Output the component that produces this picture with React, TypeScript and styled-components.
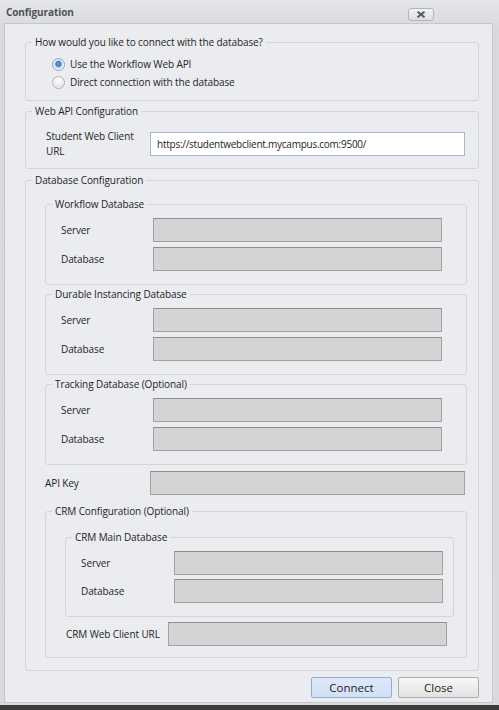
import styled, { createGlobalStyle } from "styled-components";

const GlobalStyle = createGlobalStyle`
  html, body {
    margin: 0;
    padding: 0;
    background: #3d3d3d;
  }
  body {
    font-family: "Open Sans", "Noto Sans", sans-serif;
    font-size: 10px;
    letter-spacing: -0.1px;
    color: #1e1e1e;
  }
  * {
    box-sizing: border-box;
  }
`;

const Window = styled.div`
  width: 499px;
  padding-bottom: 2px;
  background: linear-gradient(#e4e6ea, #d7d9de 30px, #d9dbdf);
`;

const TitleBar = styled.div`
  height: 23px;
  display: flex;
  align-items: center;
  justify-content: space-between;
  padding: 1px 65px 0 6px;
`;

const Title = styled.span`
  font-weight: 700;
  font-size: 10px;
  letter-spacing: -0.1px;
  color: #4f5156;
`;

const CloseBox = styled.button`
  width: 26px;
  height: 13px;
  padding: 0;
  margin-top: 4px;
  display: flex;
  align-items: center;
  justify-content: center;
  border: 1px solid #b3b5b9;
  border-radius: 3px;
  background: linear-gradient(#f3f4f6, #dcdee1);
`;

const Panel = styled.div`
  margin: 0 6px 0 4px;
  border: 1px solid #c6c8cd;
  background: #ebecf0;
  padding: 11px 13px 4px 20px;
  display: flex;
  flex-direction: column;
  gap: 3px;
`;

const Group = styled.fieldset<{ $mt?: number; $mr?: number }>`
  margin: ${(p) => p.$mt ?? 0}px ${(p) => p.$mr ?? 0}px 0 0;
  padding: 0;
  min-width: 0;
  border: 1px solid #d3d5d9;
  border-radius: 3px;
`;

const Legend = styled.legend`
  margin-left: 6px;
  padding: 0 3px;
  line-height: 14px;
  font-size: 10px;
  color: #1e1e1e;
`;

const Body = styled.div<{ $pad: string; $gap?: number }>`
  padding: ${(p) => p.$pad};
  display: flex;
  flex-direction: column;
  gap: ${(p) => p.$gap ?? 0}px;
`;

const RadioRow = styled.label`
  height: 18px;
  display: flex;
  align-items: center;
  gap: 5px;
`;

const RadioDot = styled.span<{ $on?: boolean }>`
  width: 13px;
  height: 13px;
  border-radius: 50%;
  border: 1px solid ${(p) => (p.$on ? "#8aa0c4" : "#aeb0b5")};
  background: ${(p) =>
    p.$on
      ? "radial-gradient(circle at 50% 45%, #6f97d8 0, #4a78c6 2.6px, #b8cbec 3.4px, #dfe8f7 5px, #f3f6fc 6px)"
      : "radial-gradient(circle at 50% 35%, #ffffff 0, #f4f4f4 3px, #dedfe2 6px)"};
  box-shadow: inset 0 0 0 1px rgba(255, 255, 255, 0.6);
`;

const Row = styled.div<{ $label: number; $mt?: number; $mr?: number; $ml?: number }>`
  display: grid;
  grid-template-columns: ${(p) => p.$label}px 1fr;
  align-items: center;
  margin: ${(p) => p.$mt ?? 0}px ${(p) => p.$mr ?? 0}px 0 ${(p) => p.$ml ?? 0}px;
`;

const FieldLabel = styled.span`
  line-height: 15px;
  padding-top: 1px;
`;

const Field = styled.input`
  height: 24px;
  width: 100%;
  margin: 0;
  font: inherit;
  font-size: 10px;
  color: #1e1e1e;
  padding: 0 6px;
  border: 1px solid #a2a2a2;
  border-top-color: #8e8e8e;
  background: #d4d4d4;
  outline: none;

  &:enabled {
    background: #ffffff;
    border-color: #a5b6d6;
    letter-spacing: -0.25px;
  }
`;

const Footer = styled.div`
  margin-top: 3px;
  display: flex;
  justify-content: flex-end;
  gap: 6px;
`;

const Button = styled.button<{ $primary?: boolean }>`
  width: 81px;
  height: 21px;
  padding: 0;
  font: inherit;
  font-size: 11.5px;
  color: #1e1e1e;
  border-radius: 2px;
  border: 1px solid ${(p) => (p.$primary ? "#8cadd9" : "#acacac")};
  background: ${(p) =>
    p.$primary ? "linear-gradient(#dfe8f9, #d4e0f6)" : "linear-gradient(#f7f7f7, #e2e2e2)"};
`;

const CloseIcon = () => (
  <svg width="10" height="7" viewBox="0 0 10 7">
    <path d="M1.5 0.8 L8.5 6.2 M8.5 0.8 L1.5 6.2" stroke="#55585e" strokeWidth="2" />
  </svg>
);

type DbProps = { title: string; labelW: number; pad: string; gap: number };

const ServerGroup = ({ title, labelW, pad, gap }: DbProps) => (
  <Group>
    <Legend>{title}</Legend>
    <Body $pad={pad} $gap={gap}>
      <Row $label={labelW}>
        <FieldLabel>Server</FieldLabel>
        <Field disabled />
      </Row>
      <Row $label={labelW}>
        <FieldLabel>Database</FieldLabel>
        <Field disabled />
      </Row>
    </Body>
  </Group>
);

const App = () => {
  return (
    <>
      <GlobalStyle />
      <Window>
        <TitleBar>
          <Title>Configuration</Title>
          <CloseBox aria-label="Close">
            <CloseIcon />
          </CloseBox>
        </TitleBar>
        <Panel>
          <Group>
            <Legend>How would you like to connect with the database?</Legend>
            <Body $pad="6px 0 9px 26px">
              <RadioRow>
                <RadioDot $on />
                Use the Workflow Web API
              </RadioRow>
              <RadioRow>
                <RadioDot />
                Direct connection with the database
              </RadioRow>
            </Body>
          </Group>

          <Group>
            <Legend>Web API Configuration</Legend>
            <Body $pad="10px 13px 9px 20px">
              <Row $label={104}>
                <FieldLabel>Student Web Client URL</FieldLabel>
                <Field defaultValue="https://studentwebclient.mycampus.com:9500/" />
              </Row>
            </Body>
          </Group>

          <Group $mt={1}>
            <Legend>Database Configuration</Legend>
            <Body $pad="10px 11px 12px 19px" $gap={2}>
              <ServerGroup title="Workflow Database" labelW={92} pad="7px 24px 13px 15px" gap={5} />
              <ServerGroup title="Durable Instancing Database" labelW={92} pad="7px 24px 13px 15px" gap={5} />
              <ServerGroup title="Tracking Database (Optional)" labelW={92} pad="7px 24px 13px 15px" gap={5} />

              <Row $label={105} $mt={4} $mr={2}>
                <FieldLabel>API Key</FieldLabel>
                <Field disabled />
              </Row>

              <Group $mt={7}>
                <Legend>CRM Configuration (Optional)</Legend>
                <Body $pad="12px 12px 11px 19px">
                  <ServerGroup title="CRM Main Database" labelW={93} pad="7px 10px 13px 15px" gap={4} />
                  <Row $label={102} $mt={5} $mr={7} $ml={1}>
                    <FieldLabel>CRM Web Client URL</FieldLabel>
                    <Field disabled />
                  </Row>
                </Body>
              </Group>
            </Body>
          </Group>

          <Footer>
            <Button $primary>Connect</Button>
            <Button>Close</Button>
          </Footer>
        </Panel>
      </Window>
    </>
  );
};

export default App;
